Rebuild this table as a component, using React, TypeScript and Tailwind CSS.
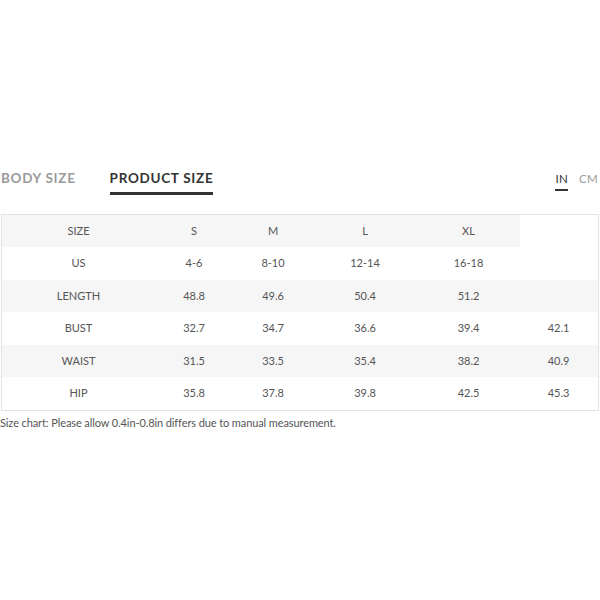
const widths = ['w-[153px]', 'w-[78px]', 'w-[80px]', 'w-[104px]', 'w-[103px]', 'w-[77px]']

const rows: { cells: string[]; grey: 'none' | 'partial' | 'full'; h: string }[] = [
  { cells: ['SIZE', 'S', 'M', 'L', 'XL'], grey: 'partial', h: 'h-[32px]' },
  { cells: ['US', '4-6', '8-10', '12-14', '16-18'], grey: 'none', h: 'h-[33px]' },
  { cells: ['LENGTH', '48.8', '49.6', '50.4', '51.2'], grey: 'full', h: 'h-[32px]' },
  { cells: ['BUST', '32.7', '34.7', '36.6', '39.4', '42.1'], grey: 'none', h: 'h-[33px]' },
  { cells: ['WAIST', '31.5', '33.5', '35.4', '38.2', '40.9'], grey: 'full', h: 'h-[32px]' },
  { cells: ['HIP', '35.8', '37.8', '39.8', '42.5', '45.3'], grey: 'none', h: 'h-[33px]' },
]

export default function App() {
  return (
    <div className="w-[600px] h-[600px] bg-white overflow-hidden" style={{ fontFamily: 'Lato, "Liberation Sans", sans-serif' }}>
      <div className="pt-[167px] flex items-start justify-between">
        <div className="flex items-start">
          <div className="pl-[1px] text-[13.5px] font-bold tracking-[0.7px] text-[#9a9a9a] leading-[22px]">BODY SIZE</div>
          <div className="ml-[34px] flex flex-col">
            <div className="text-[13.5px] font-bold tracking-[0.7px] text-[#333] leading-[22px]">PRODUCT SIZE</div>
            <div className="mt-[3px] h-[3px] bg-[#333]" />
          </div>
        </div>
        <div className="flex items-start gap-[11px] pr-[2px] pt-[5px] text-[11.5px] tracking-[0.3px] leading-[14px]">
          <div className="flex flex-col">
            <span className="text-[#333]">IN</span>
            <span className="mt-[3px] h-[1.5px] bg-[#333]" />
          </div>
          <span className="text-[#999]">CM</span>
        </div>
      </div>

      <div className="mt-[19px] mx-[1px] border border-[#e2e2e2] text-[11px] text-[#555]">
        {rows.map((row, i) => (
          <div key={i} className={`flex ${row.h} ${row.grey === 'full' ? 'bg-[#f6f6f6]' : ''}`}>
            {row.cells.map((c, j) => (
              <div
                key={j}
                className={`${widths[j]} flex items-center justify-center ${row.grey === 'partial' ? 'bg-[#f6f6f6]' : ''}`}
              >
                {c}
              </div>
            ))}
          </div>
        ))}
      </div>

      <div className="mt-[5px] text-[11px] tracking-[-0.1px] text-[#555] leading-[14px]">
        Size chart: Please allow 0.4in-0.8in differs due to manual measurement.
      </div>
    </div>
  )
}
